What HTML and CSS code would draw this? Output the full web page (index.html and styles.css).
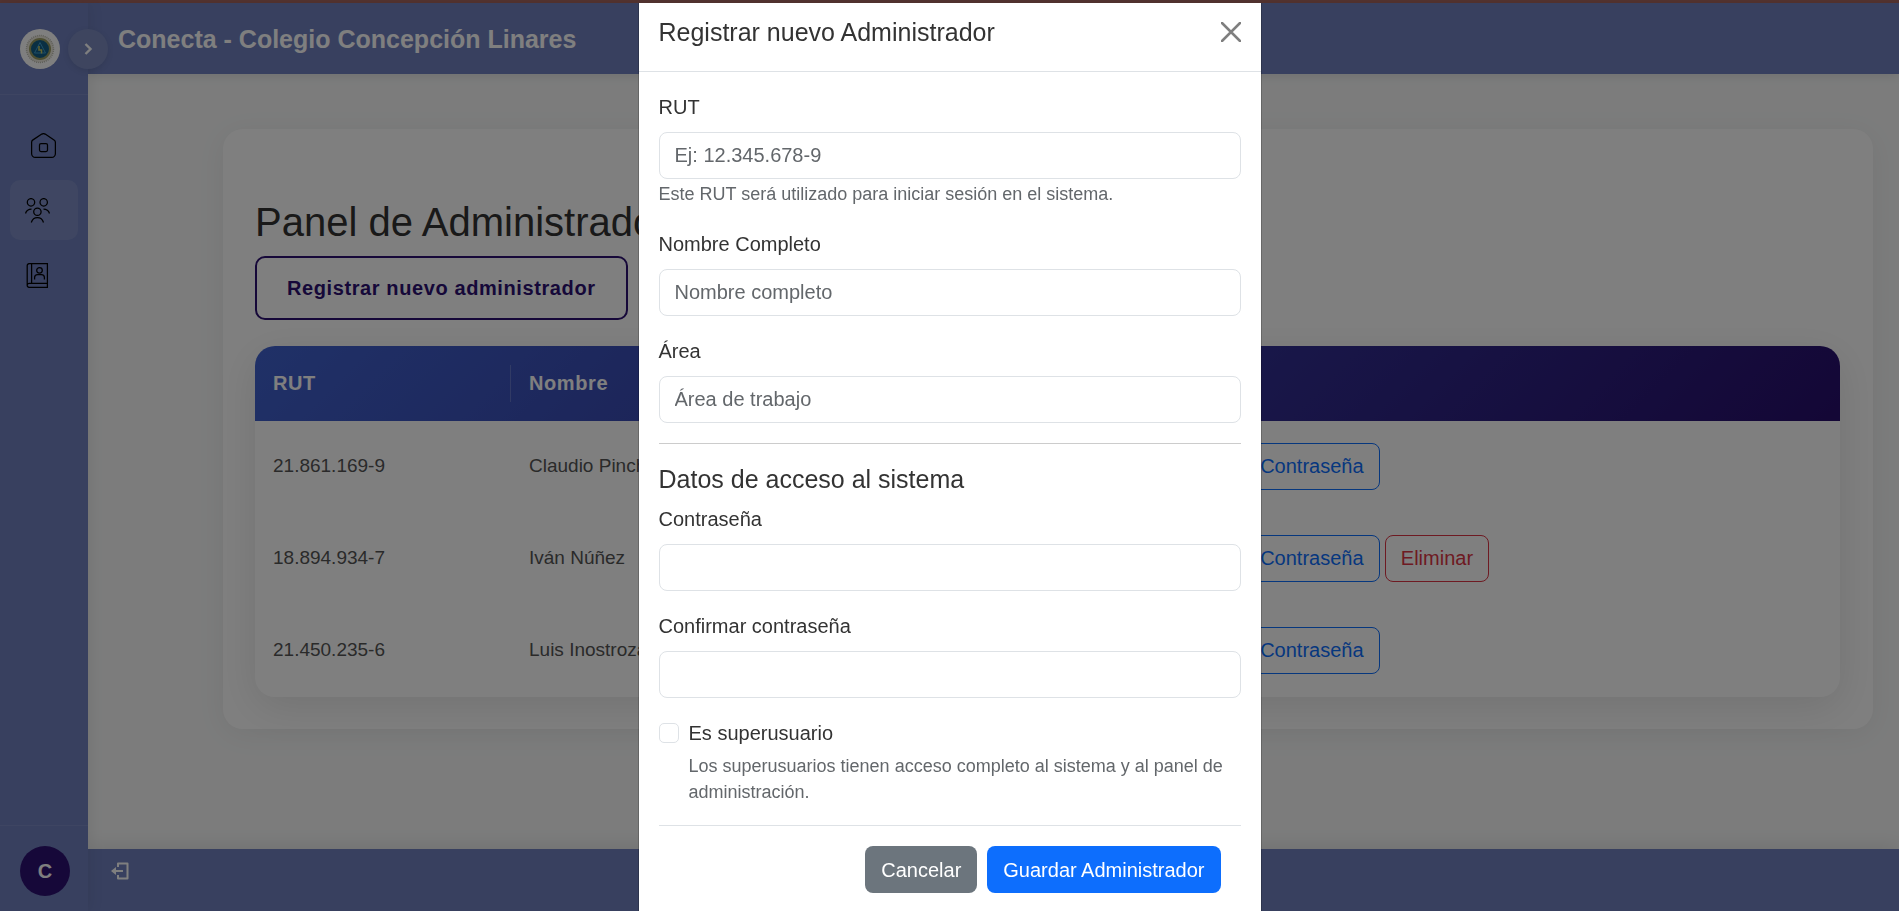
FILE: index.html
```html
<!DOCTYPE html>
<html lang="es">
<head>
<meta charset="utf-8">
<title>Conecta - Colegio Concepción Linares</title>
<link rel="stylesheet" href="styles.css">
</head>
<body>
<div class="app">
  <aside class="sidebar">
    <div class="sidebar-top">
      <svg class="logo" viewBox="0 0 40 40" aria-label="Logo">
        <circle cx="20" cy="20" r="20" fill="#fff"/>
        <circle cx="20" cy="20" r="13.500" fill="#ece9dc" stroke="#bdbdb2" stroke-width="1.500" stroke-dasharray="1 1"/>
        <circle cx="20" cy="20" r="10" fill="#145f86" stroke="#9a9c62" stroke-width="2"/>
        <path d="M20 13.5 25.5 24h-11z" fill="none" stroke="#3f9ccc"/>
        <path d="M19 17v4h2.500v3.500" fill="none" stroke="#c8c860" stroke-width="1.500"/>
      </svg>
      <button class="toggle" type="button" aria-label="Expandir menú">
        <svg viewBox="0 0 12 12"><path d="M3.5 1 8.5 6l-5 5" fill="none" stroke="#fff" stroke-width="2.4"/></svg>
      </button>
    </div>
    <nav class="menu">
      <a class="menu-item menu-home" href="#" aria-label="Inicio">
        <svg viewBox="0 0 25 25"><path d="M.6 9.4Q.6 7.8 2 6.9L10.8 1.100Q12.500 .1 14.200 1.100L23 6.900Q24.400 7.800 24.400 9.400V20.400a4 4 0 0 1-4 4H4.600a4 4 0 0 1-4-4z"/><rect x="8.500" y="10.500" width="8" height="8" rx="1.500"/></svg>
      </a>
      <a class="menu-item active" href="#" aria-label="Administradores">
        <svg viewBox="0 0 25 25"><circle cx="6" cy="4.300" r="3.700"/><circle cx="18.700" cy="4.300" r="3.700"/><circle cx="12.400" cy="13.700" r="3.700"/><path d="M.5 15.500c.8-3 3-4.500 6-4.500M24.500 15.500c-.8-3-3-4.500-6-4.500M6.300 24.500c1-3.200 3.100-4.800 6.100-4.800s5.100 1.600 6.100 4.800"/></svg>
      </a>
      <a class="menu-item" href="#" aria-label="Directorio">
        <svg viewBox="0 0 25 25"><path d="M22.400.6H4.200A2 2 0 0 0 2.200 2.600V22.400a2 2 0 0 0 2 2H22.400zM6.600.6V20.400M22.400 20.400H4.200a2 2 0 0 0-2 2"/><circle cx="14.500" cy="7.300" r="2.800"/><path d="M9.600 16.500V14.500q0-3 3-3h3.800q3 0 3 3V16.500"/></svg>
      </a>
    </nav>
    <div class="sidebar-bottom"><span class="avatar">C</span></div>
  </aside>
  <div class="main">
    <header class="topbar"><h1 class="brand">Conecta - Colegio Concepción Linares</h1></header>
    <main class="content">
      <section class="card">
        <h2 class="page-title">Panel de Administradores</h2>
        <button class="btn-new" type="button">Registrar nuevo administrador</button>
        <div class="table-wrap">
          <table class="table">
            <thead><tr><th class="col-rut">RUT</th><th class="col-mid">Nombre</th><th class="col-mid">Área</th><th>Acciones</th></tr></thead>
            <tbody>
              <tr><td>21.861.169-9</td><td>Claudio Pincheira</td><td></td><td><button class="btn btn-outline" type="button">Cambiar Contraseña</button></td></tr>
              <tr><td>18.894.934-7</td><td>Iván Núñez</td><td></td><td><button class="btn btn-outline" type="button">Cambiar Contraseña</button> <button class="btn btn-danger" type="button">Eliminar</button></td></tr>
              <tr><td>21.450.235-6</td><td>Luis Inostroza</td><td></td><td><button class="btn btn-outline" type="button">Cambiar Contraseña</button></td></tr>
            </tbody>
          </table>
        </div>
      </section>
    </main>
    <footer class="footer">
      <a class="exit" href="#" aria-label="Cerrar sesión">
        <svg viewBox="0 0 18 18"><path d="M7 5V1.500h9.500v15H7V13M1.500 9H12" fill="none" stroke="#fff" stroke-width="2" stroke-linejoin="round"/><path d="M0 9l5-4v8z" fill="#fff"/></svg>
      </a>
    </footer>
  </div>
</div>
<div class="backdrop">
  <div class="modal" role="dialog" aria-modal="true" aria-labelledby="modal-title">
    <div class="modal-header">
      <h2 class="modal-title" id="modal-title">Registrar nuevo Administrador</h2>
      <button class="close" type="button" aria-label="Cerrar">
        <svg viewBox="0 0 20 20"><path d="M1 1l18 18M19 1L1 19" fill="none" stroke="#7f7f7f" stroke-width="2.500" stroke-linecap="round"/></svg>
      </button>
    </div>
    <form class="modal-body">
      <div class="field">
        <label for="rut">RUT</label>
        <input class="input" id="rut" type="text" placeholder="Ej: 12.345.678-9">
        <small class="hint">Este RUT será utilizado para iniciar sesión en el sistema.</small>
      </div>
      <div class="field">
        <label for="nombre">Nombre Completo</label>
        <input class="input" id="nombre" type="text" placeholder="Nombre completo">
      </div>
      <div class="field">
        <label for="area">Área</label>
        <input class="input" id="area" type="text" placeholder="Área de trabajo">
      </div>
      <hr class="rule">
      <h3 class="section-title">Datos de acceso al sistema</h3>
      <div class="field">
        <label for="clave">Contraseña</label>
        <input class="input" id="clave" type="password">
      </div>
      <div class="field">
        <label for="clave2">Confirmar contraseña</label>
        <input class="input" id="clave2" type="password">
      </div>
      <div class="check">
        <input class="checkbox" id="super" type="checkbox">
        <div>
          <label class="check-label" for="super">Es superusuario</label>
          <p class="check-help">Los superusuarios tienen acceso completo al sistema y al panel de administración.</p>
        </div>
      </div>
      <div class="modal-footer">
        <button class="btn btn-secondary" type="button">Cancelar</button>
        <button class="btn btn-primary" type="submit">Guardar Administrador</button>
      </div>
    </form>
  </div>
</div>
</body>
</html>
```
FILE: styles.css
```css
* { box-sizing: border-box; }
html, body { height: 100%; }
body {
  margin: 0;
  overflow: hidden;
  font: 20px/30px "Liberation Sans", Arial, sans-serif;
  color: #333;
}
h1, h2, h3, p { margin: 0; font-weight: 400; }
button, input { font: inherit; }
svg { display: block; }

.app {
  display: flex;
  min-height: 100vh;
  border-top: 3px solid #a66660;
  background: #f8f9f9;
}
.sidebar {
  z-index: 1;
  display: flex;
  flex-direction: column;
  flex: 0 0 88px;
  background: #7080be;
  box-shadow: 0 0 15px rgba(0, 0, 0, .1);
}
.sidebar-top {
  position: relative;
  padding: 26px 20px 25px;
  border-bottom: 1px solid #7c8bc5;
}
.logo { width: 40px; height: 40px; }
.toggle {
  position: absolute;
  top: 26px;
  right: -20px;
  display: grid;
  place-items: center;
  width: 40px;
  height: 40px;
  padding: 0;
  border: 0;
  border-radius: 50%;
  background: #7c8bbf;
  box-shadow: 0 2px 6px rgba(0, 0, 0, .1);
}
.toggle svg { width: 12px; height: 12px; }
.menu {
  display: flex;
  flex-direction: column;
  flex: 1;
  gap: 5px;
  padding: 20px 10px;
}
.menu-item {
  display: flex;
  align-items: center;
  height: 60px;
  padding-left: 15px;
  border-radius: 10px;
}
.menu-home { padding-left: 21px; }
.menu-item.active { background: #7e8dc4; }
.menu-item svg { width: 25px; height: 25px; fill: none; stroke: #000; stroke-width: 1.25; }
.sidebar-bottom { padding: 20px 18px 15px 20px; border-top: 1px solid #7c8bc5; }
.avatar {
  display: grid;
  place-items: center;
  width: 50px;
  height: 50px;
  border-radius: 50%;
  background: #2d1172;
  color: #fff;
  font-weight: 700;
}

.main { display: flex; flex-direction: column; flex: 1; min-width: 0; }
.topbar {
  height: 71px;
  padding: 20px 30px;
  background: #7080be;
  box-shadow: 0 2px 10px rgba(0, 0, 0, .1);
}
.brand { font-size: 25px; line-height: 32px; font-weight: 700; color: #fff; }
.content { flex: 1; padding: 55px 26px 0 135px; }
.card {
  padding: 69px 33px 32px 32px;
  border-radius: 20px;
  background: #fff;
  box-shadow: 0 5px 30px rgba(0, 0, 0, .06);
}
.page-title { margin-bottom: 10px; font-size: 40px; line-height: 48px; }
.btn-new {
  display: block;
  height: 64px;
  padding: 0 30px;
  border: 2px solid #2d1172;
  border-radius: 10px;
  background: none;
  color: #2d1172;
  font-weight: 700;
  letter-spacing: .03em;
}
.table-wrap {
  margin-top: 26px;
  border-radius: 20px;
  overflow: hidden;
  box-shadow: 0 10px 40px rgba(0, 0, 0, .1);
}
.table { width: 100%; border-collapse: collapse; table-layout: fixed; font-size: 19px; }
.table thead { background: linear-gradient(135deg, #4062cf, #280e6c); }
.table th {
  position: relative;
  height: 75px;
  padding: 0 18px 2px;
  text-align: left;
  font-size: 20px;
  letter-spacing: .03em;
  color: #fff;
}
.table th:not(:last-child)::after {
  content: "";
  position: absolute;
  top: 25%;
  right: 0;
  width: 1px;
  height: 50%;
  background: rgba(255, 255, 255, .2);
}
.col-rut { width: 256px; }
.col-mid { width: 20%; }
.table td { height: 92px; padding: 0 18px 2px; color: #555; }

.btn {
  height: 47px;
  padding: 0 15px;
  border: 1px solid transparent;
  border-radius: 8px;
  font-size: 20px;
  color: #fff;
}
.btn-outline { border-color: #0d6efd; background: none; color: #0d6efd; }
.btn-danger { border-color: #dc3545; background: none; color: #dc3545; }
.btn-secondary { background: #6c757d; }
.btn-primary { background: #0d6efd; }

.footer {
  height: 62px;
  padding: 13px 23px;
  background: #7080be;
  box-shadow: 0 -2px 20px rgba(0, 0, 0, .1);
}
.exit, .exit svg { display: block; width: 18px; height: 18px; }

.backdrop {
  position: fixed;
  inset: 0;
  z-index: 10;
  display: flex;
  justify-content: center;
  padding-top: 3px;
  background: rgba(0, 0, 0, .5);
}
.modal {
  width: 624px;
  border: solid rgba(0, 0, 0, .18);
  border-width: 0 1px;
  background: #fff;
  background-clip: padding-box;
}
.modal-header {
  display: flex;
  align-items: center;
  justify-content: space-between;
  padding: 10px 20px 20px;
  border-bottom: 1px solid #dee2e6;
}
.modal-title { font-size: 25px; line-height: 38px; }
.close { padding: 0; border: 0; background: none; }
.close svg { width: 20px; height: 20px; }
.modal-body { padding: 20px 20px 0; }
.field { margin-bottom: 20px; }
.field label { display: block; margin-bottom: 10px; }
.input {
  display: block;
  width: 100%;
  height: 47px;
  padding: 0 15px;
  border: 1px solid #dee2e6;
  border-radius: 8px;
  background: #fff;
  color: #333;
}
.input::placeholder { color: #63676b; opacity: 1; }
.hint { display: block; font-size: 18px; line-height: 30px; color: #63676b; }
.rule { margin: 20px 0; border: 0; border-top: 1px solid #ccc; }
.section-title { margin-bottom: 10px; font-size: 25px; line-height: 30px; }
.check { display: flex; gap: 10px; margin-bottom: 20px; }
.checkbox {
  appearance: none;
  flex: 0 0 20px;
  height: 20px;
  margin: 5px 0;
  border: 1px solid #dee2e6;
  border-radius: 5px;
}
.check-label { display: block; }
.check-help { margin-top: 5px; font-size: 18px; line-height: 26px; color: #63676b; }
.modal-footer {
  display: flex;
  justify-content: flex-end;
  gap: 10px;
  padding: 20px;
  border-top: 1px solid #dee2e6;
}
```
